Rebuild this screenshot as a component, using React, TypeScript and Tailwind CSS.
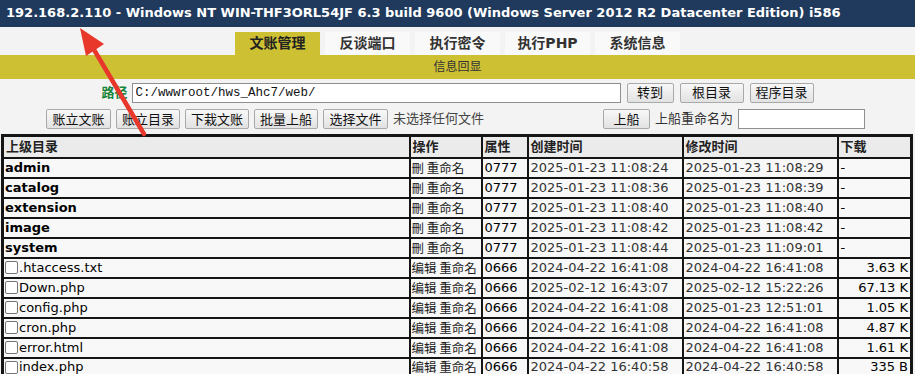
import React from "react";

const font = { fontFamily: '"DejaVu Sans", "Noto Sans CJK SC", sans-serif' };
const cjk = { fontFamily: '"Noto Sans CJK TC", "Noto Sans CJK SC", sans-serif' };

type Row = {
  name: string;
  dir: boolean;
  op: string;
  attr: string;
  ctime: string;
  mtime: string;
  size: string;
};

const rows: Row[] = [
  { name: "admin", dir: true, op: "刪 重命名", attr: "0777", ctime: "2025-01-23 11:08:24", mtime: "2025-01-23 11:08:29", size: "-" },
  { name: "catalog", dir: true, op: "刪 重命名", attr: "0777", ctime: "2025-01-23 11:08:36", mtime: "2025-01-23 11:08:39", size: "-" },
  { name: "extension", dir: true, op: "刪 重命名", attr: "0777", ctime: "2025-01-23 11:08:40", mtime: "2025-01-23 11:08:40", size: "-" },
  { name: "image", dir: true, op: "刪 重命名", attr: "0777", ctime: "2025-01-23 11:08:42", mtime: "2025-01-23 11:08:42", size: "-" },
  { name: "system", dir: true, op: "刪 重命名", attr: "0777", ctime: "2025-01-23 11:08:44", mtime: "2025-01-23 11:09:01", size: "-" },
  { name: ".htaccess.txt", dir: false, op: "编辑 重命名", attr: "0666", ctime: "2024-04-22 16:41:08", mtime: "2024-04-22 16:41:08", size: "3.63 K" },
  { name: "Down.php", dir: false, op: "编辑 重命名", attr: "0666", ctime: "2025-02-12 16:43:07", mtime: "2025-02-12 15:22:26", size: "67.13 K" },
  { name: "config.php", dir: false, op: "编辑 重命名", attr: "0666", ctime: "2024-04-22 16:41:08", mtime: "2025-01-23 12:51:01", size: "1.05 K" },
  { name: "cron.php", dir: false, op: "编辑 重命名", attr: "0666", ctime: "2024-04-22 16:41:08", mtime: "2024-04-22 16:41:08", size: "4.87 K" },
  { name: "error.html", dir: false, op: "编辑 重命名", attr: "0666", ctime: "2024-04-22 16:41:08", mtime: "2024-04-22 16:41:08", size: "1.61 K" },
  { name: "index.php", dir: false, op: "编辑 重命名", attr: "0666", ctime: "2024-04-22 16:40:58", mtime: "2024-04-22 16:40:58", size: "335 B" },
];

const tabs = ["文账管理", "反谈端口", "执行密令", "执行PHP", "系统信息"];

function Btn({ children, w }: { children: React.ReactNode; w: string }) {
  return (
    <button
      className={`${w} h-[20px] shrink-0 rounded-[2px] border border-[#a9a9a9] bg-gradient-to-b from-[#f8f8f8] to-[#e2e2e2] text-[13px] leading-none text-[#111]`}
    >
      {children}
    </button>
  );
}

export default function App() {
  return (
    <div className="relative h-[374px] w-[915px] overflow-hidden bg-[#f3f3f3] text-[13px] text-black" style={font}>
      {/* title */}
      <div className="h-[27px] bg-[#1f3a5d] pl-[6px] pt-[5px] text-[13px] font-bold leading-[16px] whitespace-nowrap text-white">
        192.168.2.110 - Windows NT WIN-THF3ORL54JF 6.3 build 9600 (Windows Server 2012 R2 Datacenter Edition) i586
      </div>

      {/* tabs */}
      <div className="flex h-[28px] items-end justify-center gap-[5px]">
        {tabs.map((t, i) => (
          <div
            key={t}
            className={`flex h-[23px] w-[85px] items-center justify-center text-[14px] font-bold ${
              i === 0 ? "bg-[#cdc033] text-[#222]" : "bg-[#f9f9f9] text-[#333]"
            }`}
          >
            {t}
          </div>
        ))}
      </div>

      {/* info bar */}
      <div className="flex h-[24px] items-center justify-center bg-[#cdc033] text-[12px] text-[#333]">信息回显</div>

      {/* path row */}
      <div className="flex h-[26px] items-center justify-center gap-[6px] pt-[1px]">
        <span className="mr-[-2px] text-[13px] font-bold text-[#17863a]">路径</span>
        <input
          className="h-[20px] w-[489px] border border-[#8f8f8f] bg-white px-[3px] text-[12.5px] text-[#111] outline-none"
          style={{ fontFamily: '"Liberation Mono", monospace' }}
          defaultValue="C:/wwwroot/hws_Ahc7/web/"
        />
        <Btn w="w-[47px]">转到</Btn>
        <Btn w="w-[64px]">根目录</Btn>
        <Btn w="w-[64px]">程序目录</Btn>
      </div>

      {/* action row */}
      <div className="flex h-[26px] items-center pl-[46px] pt-[2px]">
        <div className="flex items-center gap-[5px]">
          <Btn w="w-[65px]">账立文账</Btn>
          <Btn w="w-[64px]">账立目录</Btn>
          <Btn w="w-[64px]">下栽文账</Btn>
          <Btn w="w-[64px]">批量上船</Btn>
          <Btn w="w-[65px]">选择文件</Btn>
          <span className="text-[13px] text-[#444]">未选择任何文件</span>
        </div>
        <div className="ml-[119px] flex items-center gap-[5px]">
          <Btn w="w-[47px]">上船</Btn>
          <span className="text-[13px] text-[#333]">上船重命名为</span>
          <input className="h-[20px] w-[127px] border border-[#8f8f8f] bg-white outline-none" />
        </div>
      </div>

      {/* table */}
      <table className="ml-[1px] mt-[3px] w-[912px] table-fixed border-collapse border-[3px] border-[#151515] text-[13px]">
        <colgroup>
          <col className="w-[407px]" />
          <col className="w-[72px]" />
          <col className="w-[46px]" />
          <col className="w-[155px]" />
          <col className="w-[155px]" />
          <col />
        </colgroup>
        <thead>
          <tr className="h-[22px] bg-[#ebebeb] font-bold text-[#222]">
            <td className="border-2 border-[#151515] px-[2px]">上级目录</td>
            <td className="border-2 border-[#151515] px-[2px]">操作</td>
            <td className="border-2 border-[#151515] px-[2px]">属性</td>
            <td className="border-2 border-[#151515] px-[2px]">创建时间</td>
            <td className="border-2 border-[#151515] px-[2px]">修改时间</td>
            <td className="border-2 border-[#151515] px-[2px]">下载</td>
          </tr>
        </thead>
        <tbody>
          {rows.map((r) => (
            <tr key={r.name} className="h-[20px] bg-[#f8f8f8] leading-[16px]">
              <td className="border-2 border-[#151515] px-[1px] whitespace-nowrap">
                {r.dir ? (
                  <span className="font-bold">{r.name}</span>
                ) : (
                  <span className="flex items-center">
                    <span className="mr-[1px] inline-block h-[13px] w-[13px] rounded-[2px] border border-[#767676] bg-white" />
                    {r.name}
                  </span>
                )}
              </td>
              <td className="border-2 border-[#151515] px-[1px] text-[12.5px] whitespace-nowrap text-[#222]" style={cjk}>
                {r.op}
              </td>
              <td className="border-2 border-[#151515] px-[2px]">{r.attr}</td>
              <td className="border-2 border-[#151515] px-[2px] whitespace-nowrap text-[#333]">{r.ctime}</td>
              <td className="border-2 border-[#151515] px-[2px] whitespace-nowrap text-[#333]">{r.mtime}</td>
              <td
                className={`border-2 border-[#151515] px-[2px] whitespace-nowrap ${
                  r.size === "-" ? "text-left" : "text-right"
                }`}
              >
                {r.size}
              </td>
            </tr>
          ))}
        </tbody>
      </table>

      {/* red arrow annotation */}
      <svg className="pointer-events-none absolute left-0 top-0" width="915" height="374">
        <line x1="144" y1="134" x2="93" y2="48" stroke="#e8382b" strokeWidth="4.5" strokeLinecap="round" />
        <polygon points="80,28 104,44 86,56" fill="#e8382b" />
      </svg>
    </div>
  );
}
